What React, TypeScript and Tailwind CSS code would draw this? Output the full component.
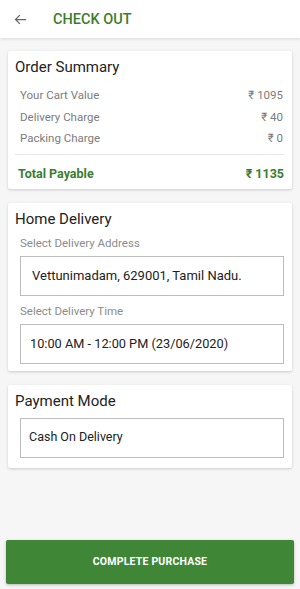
import React from 'react';

const rows = [
  { label: 'Your Cart Value', value: '₹ 1095' },
  { label: 'Delivery Charge', value: '₹ 40' },
  { label: 'Packing Charge', value: '₹ 0' },
];

const Card: React.FC<{ title: string; children: React.ReactNode; className?: string }> = ({ title, children, className }) => (
  <div className={`bg-white rounded-[2px] shadow-[0_1px_3px_rgba(0,0,0,0.18)] pl-[7px] pr-[8px] ${className ?? ''}`}>
    <div className="text-[15px] leading-[18px] text-[#222] pt-[7px]">{title}</div>
    {children}
  </div>
);

const Field: React.FC<{ label: string; value: string; indent?: string; size?: string }> = ({
  label,
  value,
  indent = 'pl-[9px]',
  size = 'text-[13px]',
}) => (
  <div className="pl-[5px]">
    <div className="text-[11.5px] leading-[14px] text-[#8c8c8c] mt-[8px]">{label}</div>
    <div className={`mt-[6px] h-[40px] border border-[#bdbdbd] flex items-center ${indent} ${size} text-[#222]`}>
      {value}
    </div>
  </div>
);

export default function App() {
  return (
    <div className="w-[300px] h-[589px] flex flex-col bg-[#f6f6f6] font-['Roboto',sans-serif] antialiased">
      {/* Header */}
      <div className="h-[38px] bg-white flex items-center shadow-[0_1px_3px_rgba(0,0,0,0.12)] relative z-10">
        <svg className="ml-[13px] w-[15px] h-[15px]" viewBox="0 0 24 24" fill="none" stroke="#666" strokeWidth="2">
          <path d="M21 12H4M11 5l-7 7 7 7" />
        </svg>
        <span className="ml-[25px] mt-[1px] text-[14.5px] font-medium text-[#3b7d2f]">CHECK OUT</span>
      </div>

      <div className="flex-1 px-[8px] pt-[13px] flex flex-col gap-[14px]">
        {/* Order summary */}
        <Card title="Order Summary">
          <div className="mt-[9px] pl-[5px] flex flex-col">
            {rows.map((r) => (
              <div key={r.label} className="flex justify-between items-center h-[21.5px] text-[11.5px] text-[#7c7c7c] pr-[1px]">
                <span>{r.label}</span>
                <span>{r.value}</span>
              </div>
            ))}
          </div>
          <div className="mt-[4px] border-t border-[#e6e6e6]" />
          <div className="flex justify-between items-center pt-[12px] pb-[8px] leading-[14px] pl-[3px] text-[12.5px] font-bold text-[#3b7d2f]">
            <span>Total Payable</span>
            <span>₹ 1135</span>
          </div>
        </Card>

        {/* Home delivery */}
        <Card title="Home Delivery" className="pb-[7px]">
          <Field label="Select Delivery Address" value="Vettunimadam, 629001, Tamil Nadu." indent="pl-[11px]" />
          <Field label="Select Delivery Time" value="10:00 AM - 12:00 PM (23/06/2020)" size="text-[12.75px]" />
        </Card>

        {/* Payment */}
        <Card title="Payment Mode" className="pb-[10px]">
          <div className="pl-[5px]">
            <div className="mt-[8px] h-[40px] border border-[#bdbdbd] flex items-center pl-[8px] text-[12.5px] text-[#222]">
              Cash On Delivery
            </div>
          </div>
        </Card>
      </div>

      <div className="px-[6px] pb-[5px]">
        <button className="w-full h-[44px] bg-[#3f8637] rounded-[2px] shadow-[0_1px_3px_rgba(0,0,0,0.25)] text-white text-[10.5px] font-bold tracking-[0.2px]">
          COMPLETE PURCHASE
        </button>
      </div>
    </div>
  );
}
